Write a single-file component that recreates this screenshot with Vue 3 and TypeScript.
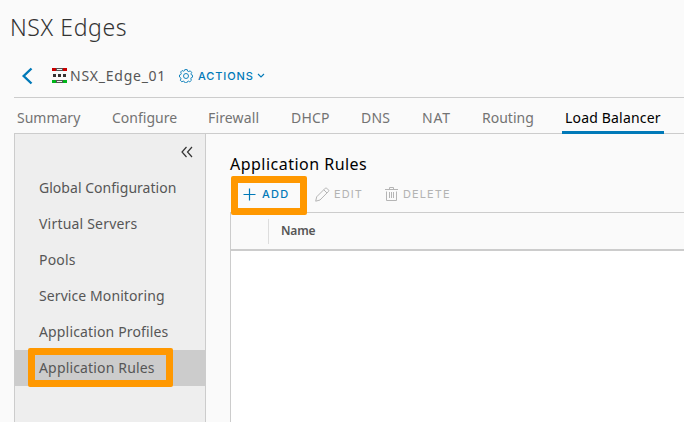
<script setup lang="ts">
interface Tab { label: string; slot: number; spacing: number }

const tabs: Tab[] = [
  { label: 'Summary', slot: 95, spacing: 0 },
  { label: 'Configure', slot: 96, spacing: 0 },
  { label: 'Firewall', slot: 83, spacing: 0.15 },
  { label: 'DHCP', slot: 70, spacing: 0.2 },
  { label: 'DNS', slot: 61, spacing: 0.2 },
  { label: 'NAT', slot: 60, spacing: 0.8 },
  { label: 'Routing', slot: 83, spacing: 0 },
  { label: 'Load Balancer', slot: 102, spacing: 0.18 },
]
const activeTab = 'Load Balancer'

const menu = [
  { label: 'Global Configuration', spacing: 0.03 },
  { label: 'Virtual Servers', spacing: 0.2 },
  { label: 'Pools', spacing: 0.2 },
  { label: 'Service Monitoring', spacing: 0.09 },
  { label: 'Application Profiles', spacing: 0.15 },
  { label: 'Application Rules', spacing: 0.16 },
]
const activeItem = 'Application Rules'
</script>

<template>
  <div class="page">
    <h1>NSX Edges</h1>
    <header class="object-bar">
      <svg class="back" width="12" height="18" viewBox="0 0 12 18"><path d="M10.500 1.500 2.700 9l7.800 7.500" fill="none" stroke="#0079b8" stroke-width="2.400" /></svg>
      <svg class="edge-icon" width="15" height="15" viewBox="0 0 15 15" shape-rendering="crispEdges">
        <path fill="#555" d="M0 0h15v3H0zM0 12h15v3H0z" />
        <path fill="#333" d="M1 6h3v3H1zM6 6h3v3H6zM11 6h3v3h-3z" />
        <path fill="#c80000" d="M0 0h4v3H0zM11 0h4v3h-4z" />
        <path fill="#00b51a" d="M0 12h4v3H0zM11 12h4v3h-4z" />
        <path fill="#eee" d="M5 1h5v1H5zM5 13h5v1H5z" />
      </svg>
      <span class="object-name">NSX_Edge_01</span>
      <button class="actions">
        <svg width="14" height="14" viewBox="0 0 14 14" fill="none" stroke="#0079b8">
          <path d="M5.8.6h2.4l.4 1.5 1.2.5 1.4-.8 1.5 1.6-.7 1.4.4 1.1 1.1.3v2l-1.300.5-.4 1.200.6 1.400-1.600 1.500-1.400-.7-1.100.5-.5 1.300H6l-.6-1.300-1.200-.5-1.400.7-1.500-1.600.7-1.400-.5-1.200L.5 8V6l1.300-.5.5-1.200-.7-1.300 1.500-1.500 1.400.7 1-.5z" stroke-width=".9" />
          <circle cx="7" cy="7" r="2.500" stroke-width=".9" />
        </svg>
        <span>ACTIONS</span>
        <svg class="caret" width="8" height="6" viewBox="0 0 8 6"><path d="m1 1 3 3 3-3" fill="none" stroke="#0079b8" stroke-width="1.100" /></svg>
      </button>
    </header>

    <nav class="tabs">
      <div v-for="tab in tabs" :key="tab.label" class="tab-slot" :style="{ width: tab.slot + 'px' }">
        <a :class="{ active: tab.label === activeTab }" :style="{ letterSpacing: tab.spacing + 'px' }">{{ tab.label }}</a>
      </div>
    </nav>

    <div class="body">
      <aside>
        <svg class="collapse" width="12" height="12" viewBox="0 0 12 12"><path d="M5.500 1 1 6l4.500 5M11 1 6.500 6 11 11" fill="none" stroke="#333" stroke-width="1.200" /></svg>
        <ul>
          <li v-for="item in menu" :key="item.label" :class="{ selected: item.label === activeItem }">
            <span :style="{ letterSpacing: item.spacing + 'px' }">{{ item.label }}</span>
            <i v-if="item.label === activeItem" class="highlight" />
          </li>
        </ul>
      </aside>
      <main>
        <h2>Application Rules</h2>
        <div class="toolbar">
          <button class="tool add">
            <svg width="13" height="13" viewBox="0 0 13 13"><path d="M6.500 .5v12M.5 6.500h12" fill="none" stroke="#0079b8" stroke-width="1.200" /></svg>
            <span>ADD</span>
            <i class="highlight" />
          </button>
          <button class="tool edit">
            <svg width="15" height="15" viewBox="0 0 15 15" fill="none" stroke="#b5b5b5"><path d="m1.700 9.800 8.600-8.600q.7-.7 1.400 0l1.800 1.800q.7.7 0 1.400L5 13l-4.300 1.200zM8.800 2.800l3.200 3.200" /></svg>
            <span>EDIT</span>
          </button>
          <button class="tool delete">
            <svg width="13" height="14" viewBox="0 0 13 14" fill="none" stroke="#b5b5b5"><path d="M0 2.500h13M4.500 2.500v-2h4v2M1.500 4.500v9h10v-9M4.500 5v6M6.500 5v6M8.500 5v6" /></svg>
            <span>DELETE</span>
          </button>
        </div>
        <section class="grid">
          <div class="grid-head">
            <div class="check-column" />
            <div class="name-column">Name</div>
          </div>
        </section>
      </main>
    </div>
  </div>
</template>

<style>
body { background: #fafafa; overflow: hidden; }
</style>

<style scoped>
* { box-sizing: border-box; }
.page { display: flex; flex-direction: column; width: 684px; height: 422px; overflow: hidden; background: #fafafa; color: #565656; font-family: "Noto Sans", "Open Sans", sans-serif; font-size: 14px; white-space: nowrap; }
h1 { margin: 0; height: 54px; padding: 10px 0 0 10px; color: #333; font-size: 23px; letter-spacing: .6px; line-height: 34px; font-weight: 300; }
.object-bar { display: flex; align-items: center; height: 44px; margin-left: 14px; border-bottom: 1px solid #ccc; }
.back { margin-left: 7px; }
.edge-icon { margin-left: 19px; }
.object-name { width: 109px; padding-left: 3px; letter-spacing: .75px; margin-top: -1px; }
button { position: relative; display: flex; align-items: center; padding: 0; border: 0; background: none; font-family: Inter, "Open Sans", sans-serif; }
.actions { color: #0079b8; font-size: 11px; font-weight: 500; letter-spacing: .9px; margin-left: 3px; }
.actions span { width: 59px; margin-left: 5px; text-align: left; }
.tabs { display: flex; height: 36px; margin-left: 14px; border-bottom: 1px solid #ccc; }
.tab-slot { flex: none; height: 36px; }
.tab-slot a { display: block; height: 36px; padding-left: 3px; line-height: 40px; color: #737373; }
.tab-slot a.active { color: #000; border-bottom: 3px solid #0079b8; }
.body { display: flex; flex: 1; min-height: 0; margin-left: 14px; }
aside { width: 192px; padding-top: 12px; border: solid #ccc; border-width: 0 1px; background: #eee; }
.collapse { display: block; margin: 0 0 24px 166px; }
ul { list-style: none; margin: 0; padding: 0; }
aside ul { margin-top: -12px; padding: 0; }
li { position: relative; display: flex; align-items: center; height: 36px; padding: 0 0 2px 24px; }
.selected { background: #ccc; }
.highlight { position: absolute; border: 7px solid #ff9800; border-radius: 2px; }
li .highlight { left: 13px; top: -2px; width: 145px; height: 39px; }
main { display: flex; flex: 1; flex-direction: column; padding: 20px 0 0 24px; }
h2 { margin: 0; height: 22px; font-size: 16px; letter-spacing: .48px; line-height: 21px; font-weight: 400; color: #000; }
.toolbar { display: flex; height: 36px; }
.tool { height: 36px; color: #b3b3b3; font-size: 11px; font-weight: 400; letter-spacing: 1.100px; }
.tool.add { width: 85px; padding-left: 13px; color: #0079b8; font-weight: 500; }
.add span { margin-left: 6px; letter-spacing: 1.200px; }
.add .highlight { left: 1px; top: 0; width: 76px; height: 39px; z-index: 1; }
.edit { width: 70px; }
.edit span { margin-left: 4px; }
.delete span { margin-left: 5px; }
.grid { flex: 1; border: solid #ccc; border-width: 1px 0 0 1px; background: #fff; }
.grid-head { display: flex; align-items: center; height: 38px; border-bottom: 2px solid #ccc; background: #fafafa; }
.check-column { width: 38px; height: 25px; border-right: 1px solid #ddd; }
.name-column { padding: 0 0 2px 12px; font-size: 12px; font-weight: 600; letter-spacing: -.15px; }
</style>
